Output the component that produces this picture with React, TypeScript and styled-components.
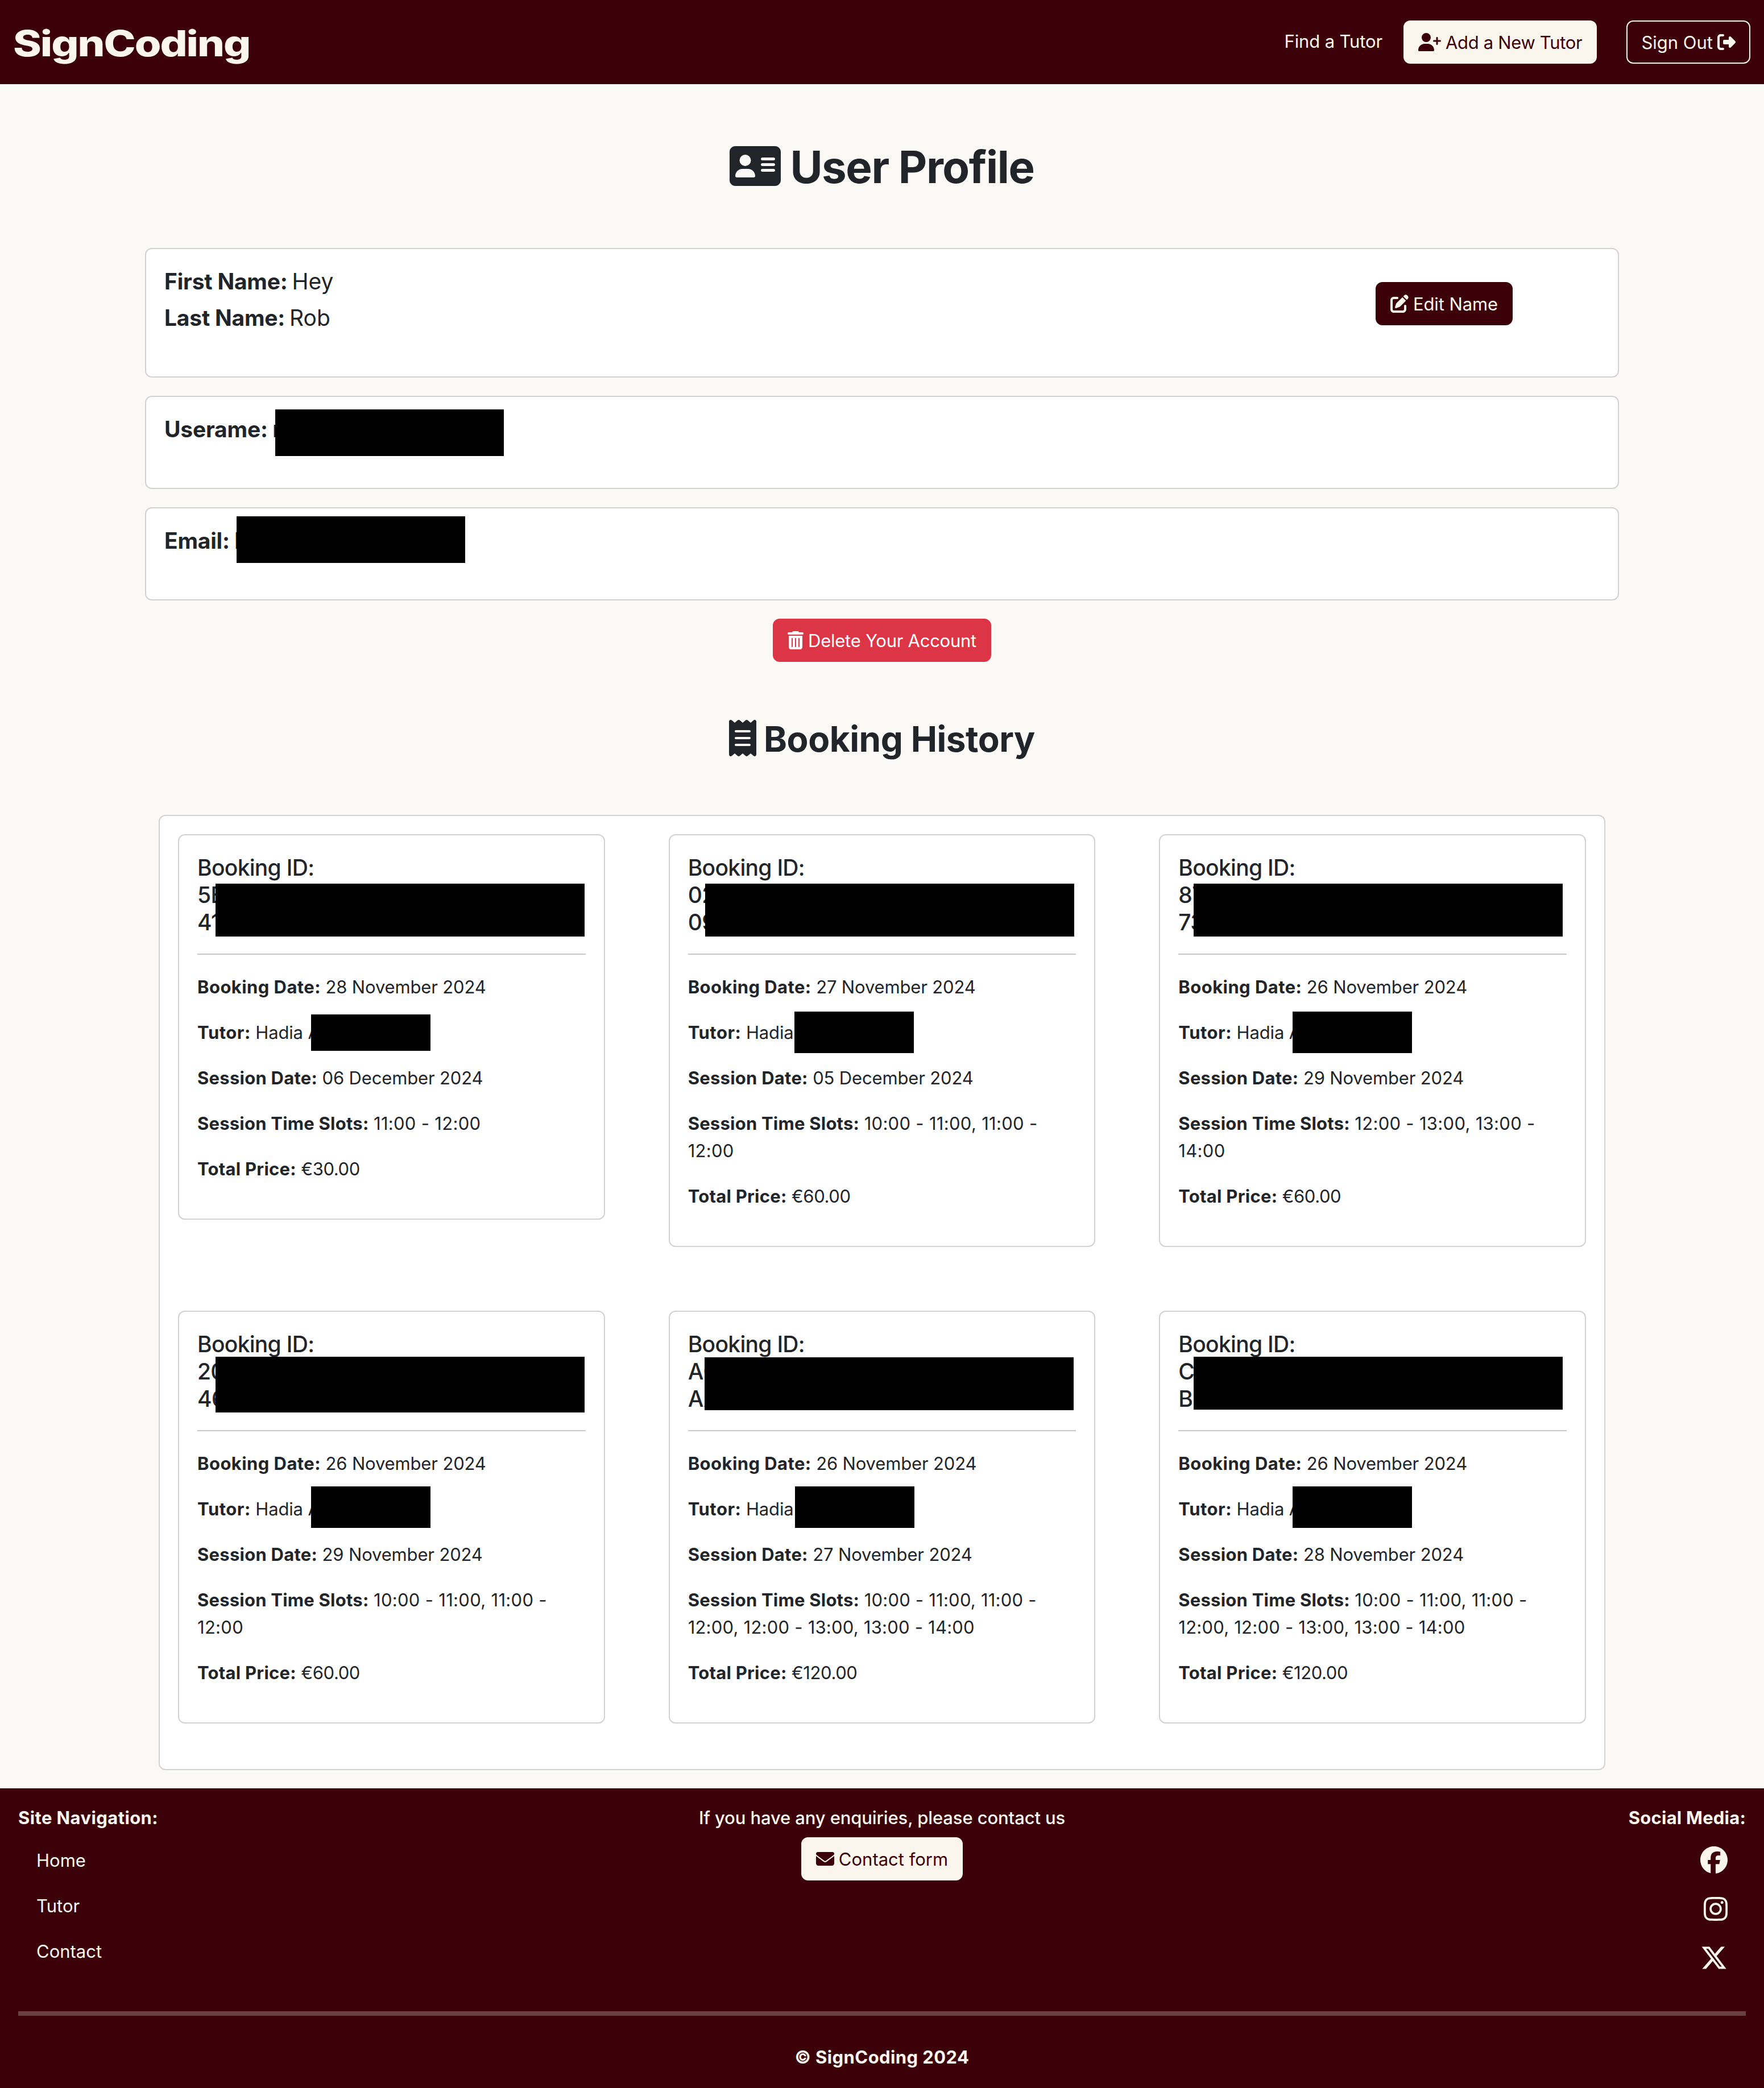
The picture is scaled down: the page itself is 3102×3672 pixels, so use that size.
import React from "react";
import styled, { createGlobalStyle } from "styled-components";
import {
  FaAddressCard,
  FaEnvelope,
  FaFacebook,
  FaInstagram,
  FaPenToSquare,
  FaReceipt,
  FaRightFromBracket,
  FaTrashCan,
  FaUserPlus,
  FaXTwitter,
} from "react-icons/fa6";

const maroon = "#3b0008";
const cream = "#faf6ed";
const ink = "#212529";
const outline = "#d2d2d3";

const GlobalStyle = createGlobalStyle`
  *, *::before, *::after { box-sizing: border-box; }
  body {
    margin: 0;
    background: #faf9f5;
    color: ${ink};
    font-family: Inter, "Liberation Sans", sans-serif;
    font-size: 31px;
    line-height: 48px;
  }
  h1, h2, h3, h4, p, ul { margin: 0; padding: 0; font-weight: inherit; }
  svg { display: block; flex: none; }
`;

const Page = styled.div`
  display: flex;
  flex-direction: column;
  min-height: 3672px;
`;

/* Icons whose artwork is not square */

const UserPlusIcon = styled(FaUserPlus)`width: 1.25em;`;
const AddressCardIcon = styled(FaAddressCard)`width: 1.125em;`;
const TrashIcon = styled(FaTrashCan)`width: 0.875em;`;
const ReceiptIcon = styled(FaReceipt)`width: 0.75em;`;
const InstagramIcon = styled(FaInstagram)`width: 0.875em;`;

/* Header */

const Header = styled.header`
  display: flex;
  align-items: center;
  justify-content: space-between;
  height: 148px;
  padding: 0 24px;
  background: ${maroon};
  color: ${cream};
`;

const Logo = styled.a`
  margin-left: -1px;
  padding-top: 3px;
  font-size: 63px;
  font-weight: 800;
  line-height: 76px;
  letter-spacing: -1.7px;
  transform: scaleX(1.2);
  transform-origin: left;
`;

const Nav = styled.nav`
  display: flex;
  align-items: center;
`;

const NavLink = styled.a`
  margin-right: 37px;
  padding-bottom: 3px;
  letter-spacing: -0.13px;
`;

type Tone = "light" | "outline" | "dark" | "danger";

const tones: Record<Tone, { bg: string; fg: string; edge: string }> = {
  light: { bg: cream, fg: maroon, edge: cream },
  outline: { bg: "transparent", fg: cream, edge: cream },
  dark: { bg: maroon, fg: cream, edge: maroon },
  danger: { bg: "#dc3545", fg: "#ffffff", edge: "#dc3545" },
};

const Button = styled.button<{ $tone: Tone; $track?: number }>`
  display: inline-flex;
  align-items: center;
  gap: 8px;
  height: 76px;
  padding: 0 24px;
  border: 2px solid ${(p) => tones[p.$tone].edge};
  border-radius: 12px;
  background: ${(p) => tones[p.$tone].bg};
  color: ${(p) => tones[p.$tone].fg};
  font: inherit;
  letter-spacing: ${(p) => p.$track ?? 0}px;
  white-space: nowrap;

  svg { font-size: 32px; }
  span { padding-top: 1px; }
`;

const SignOut = styled(Button)`
  margin-left: 52px;
`;

/* Profile */

const Main = styled.main`
  display: flex;
  flex-direction: column;
  align-items: center;
  width: 2592px;
  margin: 0 auto;
`;

const Title = styled.h1`
  display: flex;
  align-items: center;
  gap: 16px;
  height: 96px;
  margin: 96px 0;
  font-size: 78px;
  font-weight: 700;
  line-height: 96px;
  letter-spacing: -1.42px;

  svg { font-size: 80px; }
  span { padding-top: 4px; }
`;

const Subtitle = styled.h2`
  display: flex;
  align-items: center;
  gap: 13px;
  height: 76px;
  margin: 96px 0 97px;
  font-size: 62px;
  font-weight: 700;
  line-height: 76px;
  letter-spacing: -0.46px;

  svg { font-size: 64px; }
  span { padding-top: 4px; }
`;

const Card = styled.section`
  border: 2px solid ${outline};
  border-radius: 12px;
  background: #ffffff;
`;

const ProfileCard = styled(Card)<{ $height: number }>`
  position: relative;
  display: flex;
  justify-content: space-between;
  width: 100%;
  height: ${(p) => p.$height}px;
  margin-bottom: 32px;
  padding: 33px 185px 0 32px;
`;

const Fields = styled.div`
  display: flex;
  flex-direction: column;
  gap: 16px;
  font-size: 39px;
`;

const Field = styled.p`
  white-space: nowrap;

  strong { margin-right: 8px; letter-spacing: -0.22px; }
`;

const EditSlot = styled.div`
  padding-top: 25px;
`;

const Redaction = styled.div<{ $x: number; $y: number; $w: number; $h: number }>`
  position: absolute;
  left: ${(p) => p.$x}px;
  top: ${(p) => p.$y}px;
  width: ${(p) => p.$w}px;
  height: ${(p) => p.$h}px;
  background: #000000;
`;

/* Booking history */

const History = styled(Card)`
  display: grid;
  grid-template-columns: repeat(3, 1fr);
  gap: 112px;
  align-items: start;
  width: 2544px;
  margin-bottom: 32px;
  padding: 32px 32px 80px;
`;

const BookingCard = styled(Card)`
  position: relative;
  padding: 32px 32px 63px;
`;

const BookingId = styled.h3`
  padding-top: 1px;
  height: 144px;
  font-size: 39px;
  font-weight: 500;
  letter-spacing: -0.7px;
`;

const IdLine = styled.span`
  display: block;
`;

const Divider = styled.hr`
  height: 2px;
  margin: 32px 0;
  border: 0;
  background: #c8c9ca;
`;

const Details = styled.div`
  display: flex;
  flex-direction: column;
  gap: 31px;
`;

const Detail = styled.p<{ $track?: number }>`
  padding-top: 1px;
  letter-spacing: ${(p) => p.$track ?? -0.15}px;
`;

const Label = styled.strong<{ $track?: number }>`
  margin-right: 8.5px;
  font-weight: 700;
  letter-spacing: ${(p) => p.$track ?? 0.25}px;
`;

/* Footer */

const Footer = styled.footer`
  flex: 1;
  padding: 32px 32px 0;
  background: ${maroon};
  color: ${cream};
`;

const FooterColumns = styled.div`
  display: grid;
  grid-template-columns: 1fr 1fr 1fr;
  height: 360px;
`;

const FooterColumn = styled.div<{ $align: string }>`
  display: flex;
  flex-direction: column;
  align-items: ${(p) => p.$align};
`;

const FooterHeading = styled.h4<{ $weight?: number; $track: number }>`
  height: 38px;
  margin-bottom: 16px;
  padding-top: 1px;
  font-weight: ${(p) => p.$weight ?? 700};
  line-height: 38px;
  letter-spacing: ${(p) => p.$track}px;
`;

const FooterLinks = styled.ul`
  display: flex;
  flex-direction: column;
  gap: 32px;
  padding: 17px 0 0 32px;
  list-style: none;
`;

const SocialLinks = styled.div`
  display: flex;
  flex-direction: column;
  align-items: flex-end;
  gap: 38px;
  padding: 16px 32px 0 0;
  font-size: 48px;
`;

const FooterRule = styled.hr`
  height: 8px;
  margin: 0;
  border: 0;
  background: #6b4041;
`;

const Copyright = styled.p`
  padding-top: 49px;
  font-weight: 700;
  letter-spacing: 0.42px;
  text-align: center;
`;

type Box = [x: number, y: number, w: number, h: number];

interface Booking {
  id: [string, string];
  booked: string;
  surname: string;
  session: string;
  slots: string;
  price: string;
  idBox: Box;
  tutorBox: Box;
}

const bookings: Booking[] = [
  {
    id: ["5E", "41"], booked: "28 November 2024", surname: "A", session: "06 December 2024",
    slots: "11:00 - 12:00", price: "€30.00", idBox: [64, 85, 649, 93], tutorBox: [232, 315, 210, 64],
  },
  {
    id: ["02", "09"], booked: "27 November 2024", surname: "", session: "05 December 2024",
    slots: "10:00 - 11:00, 11:00 - 12:00", price: "€60.00", idBox: [62.4, 85, 649, 93], tutorBox: [219.4, 310, 210, 73],
  },
  {
    id: ["87", "73"], booked: "26 November 2024", surname: "A", session: "29 November 2024",
    slots: "12:00 - 13:00, 13:00 - 14:00", price: "€60.00", idBox: [58.7, 85, 649, 93], tutorBox: [232.7, 310, 210, 73],
  },
  {
    id: ["20", "46"], booked: "26 November 2024", surname: "A", session: "29 November 2024",
    slots: "10:00 - 11:00, 11:00 - 12:00", price: "€60.00", idBox: [64, 79, 649, 98], tutorBox: [232, 307, 210, 73],
  },
  {
    id: ["A0", "AA"], booked: "26 November 2024", surname: "", session: "27 November 2024",
    slots: "10:00 - 11:00, 11:00 - 12:00, 12:00 - 13:00, 13:00 - 14:00", price: "€120.00",
    idBox: [61.4, 80, 649, 93], tutorBox: [220.4, 307, 210, 73],
  },
  {
    id: ["C", "B"], booked: "26 November 2024", surname: "A", session: "28 November 2024",
    slots: "10:00 - 11:00, 11:00 - 12:00, 12:00 - 13:00, 13:00 - 14:00", price: "€120.00",
    idBox: [58.7, 79, 649, 93], tutorBox: [232.7, 307, 210, 73],
  },
];

function Mask({ box }: { box: Box }) {
  const [x, y, w, h] = box;
  return <Redaction $x={x} $y={y} $w={w} $h={h} />;
}

function BookingEntry({ booking }: { booking: Booking }) {
  return (
    <BookingCard>
      <BookingId>
        <IdLine>Booking ID:</IdLine>
        <IdLine>{booking.id[0]}</IdLine>
        <IdLine>{booking.id[1]}</IdLine>
      </BookingId>
      <Divider />
      <Details>
        <Detail><Label $track={0.43}>Booking Date:</Label>{booking.booked}</Detail>
        <Detail><Label $track={0.5}>Tutor:</Label>Hadia {booking.surname}</Detail>
        <Detail><Label>Session Date:</Label>{booking.session}</Detail>
        <Detail $track={booking.slots.length > 40 ? 0.22 : 0.3}>
          <Label $track={0.22}>Session Time Slots:</Label>{booking.slots}
        </Detail>
        <Detail $track={-0.4}><Label>Total Price:</Label>{booking.price}</Detail>
      </Details>
      <Mask box={booking.idBox} />
      <Mask box={booking.tutorBox} />
    </BookingCard>
  );
}

export default function App() {
  return (
    <Page>
      <GlobalStyle />
      <Header>
        <Logo>SignCoding</Logo>
        <Nav>
          <NavLink>Find a Tutor</NavLink>
          <Button $tone="light" $track={-0.33}><UserPlusIcon /><span>Add a New Tutor</span></Button>
          <SignOut $tone="outline"><span>Sign Out</span><FaRightFromBracket /></SignOut>
        </Nav>
      </Header>

      <Main>
        <Title><AddressCardIcon /><span>User Profile</span></Title>

        <ProfileCard $height={228}>
          <Fields>
            <Field><strong>First Name:</strong>Hey</Field>
            <Field><strong>Last Name:</strong>Rob</Field>
          </Fields>
          <EditSlot>
            <Button $tone="dark" $track={-0.1}><FaPenToSquare /><span>Edit Name</span></Button>
          </EditSlot>
        </ProfileCard>
        <ProfileCard $height={164}>
          <Fields><Field><strong>Userame:</strong>r</Field></Fields>
          <Mask box={[227, 22, 402, 82]} />
        </ProfileCard>
        <ProfileCard $height={164}>
          <Fields><Field><strong>Email:</strong>h</Field></Fields>
          <Mask box={[159, 14, 402, 82]} />
        </ProfileCard>

        <Button $tone="danger" $track={-0.26}><TrashIcon /><span>Delete Your Account</span></Button>

        <Subtitle><ReceiptIcon /><span>Booking History</span></Subtitle>

        <History>
          {bookings.map((booking, i) => (
            <BookingEntry key={i} booking={booking} />
          ))}
        </History>
      </Main>

      <Footer>
        <FooterColumns>
          <FooterColumn $align="flex-start">
            <FooterHeading $track={0.4}>Site Navigation:</FooterHeading>
            <FooterLinks>
              <li>Home</li>
              <li>Tutor</li>
              <li>Contact</li>
            </FooterLinks>
          </FooterColumn>
          <FooterColumn $align="center">
            <FooterHeading $weight={500} $track={-0.12}>If you have any enquiries, please contact us</FooterHeading>
            <Button $tone="light"><FaEnvelope /><span>Contact form</span></Button>
          </FooterColumn>
          <FooterColumn $align="flex-end">
            <FooterHeading $track={0.22}>Social Media:</FooterHeading>
            <SocialLinks>
              <FaFacebook />
              <InstagramIcon />
              <FaXTwitter />
            </SocialLinks>
          </FooterColumn>
        </FooterColumns>
        <FooterRule />
        <Copyright>© SignCoding 2024</Copyright>
      </Footer>
    </Page>
  );
}
